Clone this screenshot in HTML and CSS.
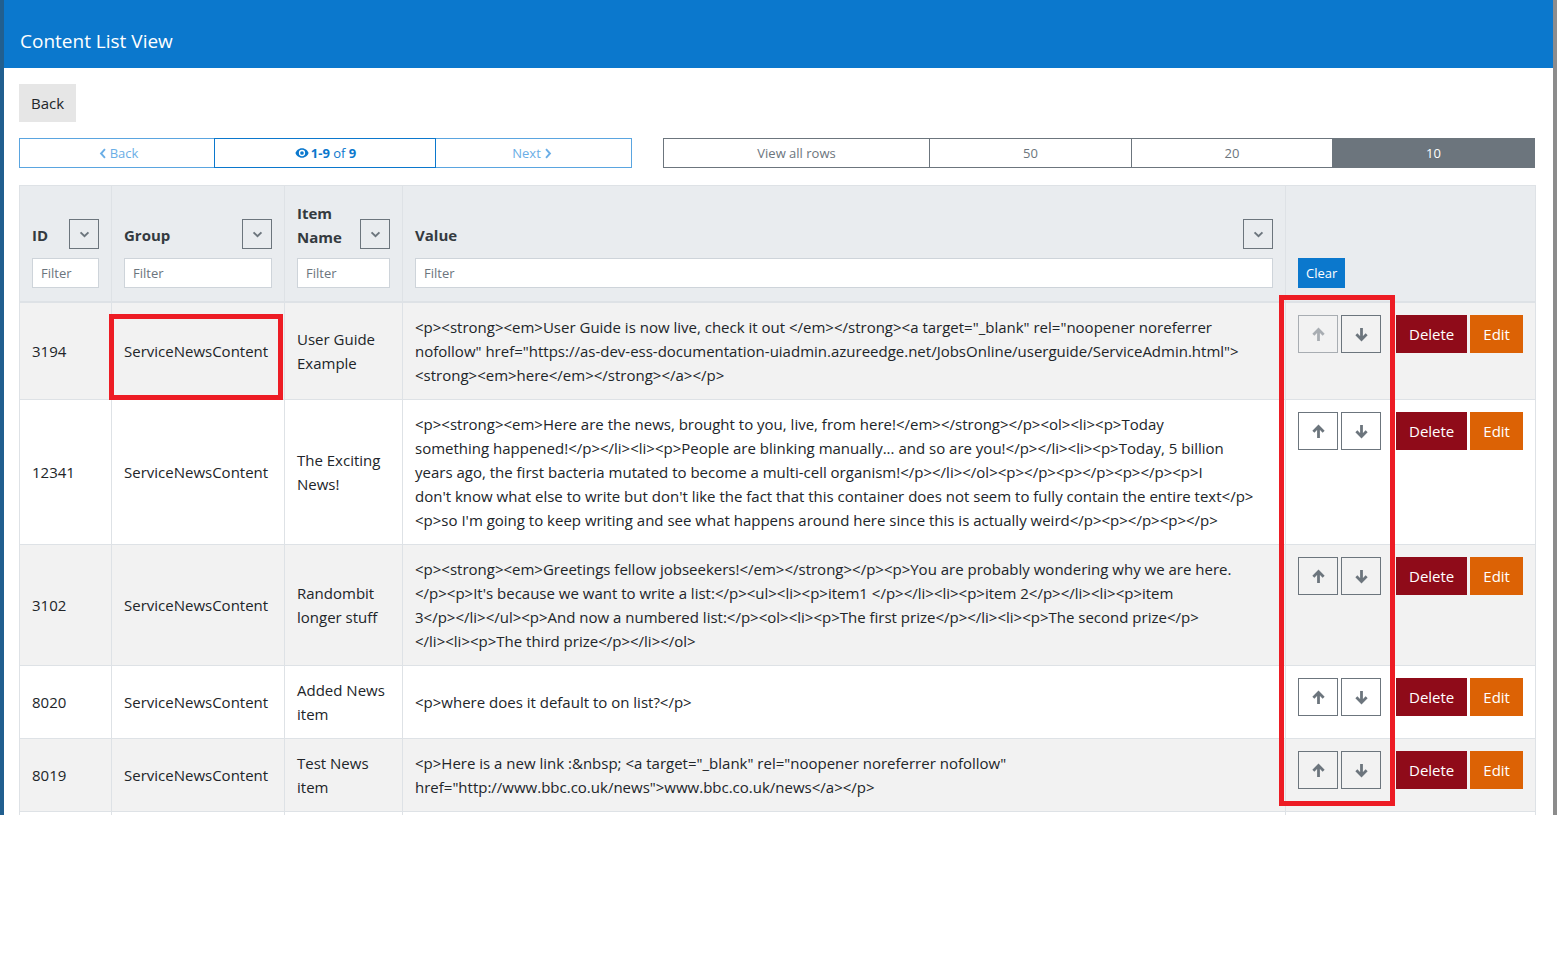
FILE: index.html
```html
<!DOCTYPE html>
<html lang="en">
<head>
<meta charset="utf-8">
<title>Content List View</title>
<link rel="stylesheet" href="styles.css">
</head>
<body>
<div class="window">
  <div class="edge-left"></div>
  <div class="main">
    <header class="topbar"><h1 class="title">Content List View</h1></header>
    <div class="content">
      <button class="btn-back">Back</button>
      <div class="toolbar">
        <div class="pager">
          <button class="pg pg-side"><svg class="chev" viewBox="0 0 10 14" width="8" height="11"><polyline points="7.5,1.5 2.5,7 7.5,12.5" fill="none" stroke="currentColor" stroke-width="2.4"/></svg>Back</button>
          <div class="pg pg-info"><svg class="eye" viewBox="0 0 16 16" width="16" height="14"><path d="M8 2.5C4 2.5 1.3 5.6.5 8c.8 2.4 3.5 5.5 7.5 5.5s6.7-3.1 7.5-5.5C14.7 5.6 12 2.5 8 2.5z" fill="currentColor"/><circle cx="8" cy="8" r="3.6" fill="#fff"/><circle cx="8" cy="8" r="2.1" fill="currentColor"/></svg><b>1-9</b>&nbsp;of&nbsp;<b>9</b></div>
          <button class="pg pg-side">Next<svg class="chev" viewBox="0 0 10 14" width="8" height="11"><polyline points="2.5,1.5 7.5,7 2.5,12.5" fill="none" stroke="currentColor" stroke-width="2.4"/></svg></button>
        </div>
        <div class="sizes">
          <button class="sz">View all rows</button>
          <button class="sz">50</button>
          <button class="sz">20</button>
          <button class="sz sz-active">10</button>
        </div>
      </div>

      <table class="grid">
        <colgroup>
          <col class="c-id"><col class="c-group"><col class="c-item"><col class="c-value"><col class="c-actions">
        </colgroup>
        <thead>
          <tr>
            <th>
              <div class="th-top"><span class="th-label">ID</span><button class="dd"><svg viewBox="0 0 12 8" width="11" height="7"><polyline points="1.5,1.5 6,6 10.5,1.5" fill="none" stroke="currentColor" stroke-width="2.2"/></svg></button></div>
              <input class="filter" placeholder="Filter">
            </th>
            <th>
              <div class="th-top"><span class="th-label">Group</span><button class="dd"><svg viewBox="0 0 12 8" width="11" height="7"><polyline points="1.5,1.5 6,6 10.5,1.5" fill="none" stroke="currentColor" stroke-width="2.2"/></svg></button></div>
              <input class="filter" placeholder="Filter">
            </th>
            <th>
              <div class="th-top"><span class="th-label th-label-wrap">Item Name</span><button class="dd"><svg viewBox="0 0 12 8" width="11" height="7"><polyline points="1.5,1.5 6,6 10.5,1.5" fill="none" stroke="currentColor" stroke-width="2.2"/></svg></button></div>
              <input class="filter" placeholder="Filter">
            </th>
            <th>
              <div class="th-top"><span class="th-label">Value</span><button class="dd"><svg viewBox="0 0 12 8" width="11" height="7"><polyline points="1.5,1.5 6,6 10.5,1.5" fill="none" stroke="currentColor" stroke-width="2.2"/></svg></button></div>
              <input class="filter" placeholder="Filter">
            </th>
            <th><button class="btn-clear">Clear</button></th>
          </tr>
        </thead>
        <tbody>
          <tr class="striped">
            <td>3194</td>
            <td>ServiceNewsContent</td>
            <td>User Guide Example</td>
            <td class="val">&lt;p&gt;&lt;strong&gt;&lt;em&gt;User Guide is now live, check it out &lt;/em&gt;&lt;/strong&gt;&lt;a target="_blank" rel="noopener noreferrer<br>nofollow" href="https://as-dev-ess-documentation-uiadmin.azureedge.net/JobsOnline/userguide/ServiceAdmin.html"&gt;<br>&lt;strong&gt;&lt;em&gt;here&lt;/em&gt;&lt;/strong&gt;&lt;/a&gt;&lt;/p&gt;</td>
            <td class="act">
              <div class="acts">
                <button class="mv" disabled><svg viewBox="0 0 14 14" width="15" height="15"><path d="M7 13V2.5M2.2 7.2L7 2.4l4.8 4.8" fill="none" stroke="currentColor" stroke-width="2.6"/></svg></button>
                <button class="mv"><svg viewBox="0 0 14 14" width="15" height="15"><path d="M7 1v10.5M2.2 6.8L7 11.6l4.8-4.8" fill="none" stroke="currentColor" stroke-width="2.6"/></svg></button>
                <button class="btn-del">Delete</button>
                <button class="btn-edit">Edit</button>
              </div>
            </td>
          </tr>
          <tr>
            <td>12341</td>
            <td>ServiceNewsContent</td>
            <td>The Exciting News!</td>
            <td class="val">&lt;p&gt;&lt;strong&gt;&lt;em&gt;Here are the news, brought to you, live, from here!&lt;/em&gt;&lt;/strong&gt;&lt;/p&gt;&lt;ol&gt;&lt;li&gt;&lt;p&gt;Today<br>something happened!&lt;/p&gt;&lt;/li&gt;&lt;li&gt;&lt;p&gt;People are blinking manually... and so are you!&lt;/p&gt;&lt;/li&gt;&lt;li&gt;&lt;p&gt;Today, 5 billion<br>years ago, the first bacteria mutated to become a multi-cell organism!&lt;/p&gt;&lt;/li&gt;&lt;/ol&gt;&lt;p&gt;&lt;/p&gt;&lt;p&gt;&lt;/p&gt;&lt;p&gt;&lt;/p&gt;&lt;p&gt;I<br>don't know what else to write but don't like the fact that this container does not seem to fully contain the entire text&lt;/p&gt;<br>&lt;p&gt;so I'm going to keep writing and see what happens around here since this is actually weird&lt;/p&gt;&lt;p&gt;&lt;/p&gt;&lt;p&gt;&lt;/p&gt;</td>
            <td class="act">
              <div class="acts">
                <button class="mv"><svg viewBox="0 0 14 14" width="15" height="15"><path d="M7 13V2.5M2.2 7.2L7 2.4l4.8 4.8" fill="none" stroke="currentColor" stroke-width="2.6"/></svg></button>
                <button class="mv"><svg viewBox="0 0 14 14" width="15" height="15"><path d="M7 1v10.5M2.2 6.8L7 11.6l4.8-4.8" fill="none" stroke="currentColor" stroke-width="2.6"/></svg></button>
                <button class="btn-del">Delete</button>
                <button class="btn-edit">Edit</button>
              </div>
            </td>
          </tr>
          <tr class="striped">
            <td>3102</td>
            <td>ServiceNewsContent</td>
            <td>Randombit longer stuff</td>
            <td class="val">&lt;p&gt;&lt;strong&gt;&lt;em&gt;Greetings fellow jobseekers!&lt;/em&gt;&lt;/strong&gt;&lt;/p&gt;&lt;p&gt;You are probably wondering why we are here.<br>&lt;/p&gt;&lt;p&gt;It's because we want to write a list:&lt;/p&gt;&lt;ul&gt;&lt;li&gt;&lt;p&gt;item1 &lt;/p&gt;&lt;/li&gt;&lt;li&gt;&lt;p&gt;item 2&lt;/p&gt;&lt;/li&gt;&lt;li&gt;&lt;p&gt;item<br>3&lt;/p&gt;&lt;/li&gt;&lt;/ul&gt;&lt;p&gt;And now a numbered list:&lt;/p&gt;&lt;ol&gt;&lt;li&gt;&lt;p&gt;The first prize&lt;/p&gt;&lt;/li&gt;&lt;li&gt;&lt;p&gt;The second prize&lt;/p&gt;<br>&lt;/li&gt;&lt;li&gt;&lt;p&gt;The third prize&lt;/p&gt;&lt;/li&gt;&lt;/ol&gt;</td>
            <td class="act">
              <div class="acts">
                <button class="mv"><svg viewBox="0 0 14 14" width="15" height="15"><path d="M7 13V2.5M2.2 7.2L7 2.4l4.8 4.8" fill="none" stroke="currentColor" stroke-width="2.6"/></svg></button>
                <button class="mv"><svg viewBox="0 0 14 14" width="15" height="15"><path d="M7 1v10.5M2.2 6.8L7 11.6l4.8-4.8" fill="none" stroke="currentColor" stroke-width="2.6"/></svg></button>
                <button class="btn-del">Delete</button>
                <button class="btn-edit">Edit</button>
              </div>
            </td>
          </tr>
          <tr>
            <td>8020</td>
            <td>ServiceNewsContent</td>
            <td>Added News item</td>
            <td class="val">&lt;p&gt;where does it default to on list?&lt;/p&gt;</td>
            <td class="act">
              <div class="acts">
                <button class="mv"><svg viewBox="0 0 14 14" width="15" height="15"><path d="M7 13V2.5M2.2 7.2L7 2.4l4.8 4.8" fill="none" stroke="currentColor" stroke-width="2.6"/></svg></button>
                <button class="mv"><svg viewBox="0 0 14 14" width="15" height="15"><path d="M7 1v10.5M2.2 6.8L7 11.6l4.8-4.8" fill="none" stroke="currentColor" stroke-width="2.6"/></svg></button>
                <button class="btn-del">Delete</button>
                <button class="btn-edit">Edit</button>
              </div>
            </td>
          </tr>
          <tr class="striped">
            <td>8019</td>
            <td>ServiceNewsContent</td>
            <td>Test News item</td>
            <td class="val">&lt;p&gt;Here is a new link :&amp;nbsp; &lt;a target="_blank" rel="noopener noreferrer nofollow"<br>href="http://www.bbc.co.uk/news"&gt;www.bbc.co.uk/news&lt;/a&gt;&lt;/p&gt;</td>
            <td class="act">
              <div class="acts">
                <button class="mv"><svg viewBox="0 0 14 14" width="15" height="15"><path d="M7 13V2.5M2.2 7.2L7 2.4l4.8 4.8" fill="none" stroke="currentColor" stroke-width="2.6"/></svg></button>
                <button class="mv"><svg viewBox="0 0 14 14" width="15" height="15"><path d="M7 1v10.5M2.2 6.8L7 11.6l4.8-4.8" fill="none" stroke="currentColor" stroke-width="2.6"/></svg></button>
                <button class="btn-del">Delete</button>
                <button class="btn-edit">Edit</button>
              </div>
            </td>
          </tr>
          <tr>
            <td>&nbsp;</td><td>&nbsp;</td><td>&nbsp;</td><td>&nbsp;</td><td>&nbsp;</td>
          </tr>
        </tbody>
      </table>
    </div>
  </div>
  <div class="scrollbar"></div>
  <div class="mark mark-group"></div>
  <div class="mark mark-order"></div>
</div>
</body>
</html>
```

FILE: styles.css
```css
* { box-sizing: border-box; }
html, body { margin: 0; background: #fff; }
body {
  font-family: "Open Sans", "Noto Sans", sans-serif;
  font-size: 15px;
  color: #212529;
}
button, input { font-family: inherit; }

.window {
  position: relative;
  display: flex;
  height: 815px;
  overflow: hidden;
}
.edge-left { flex: none; width: 4px; background: #215f8f; }
.main { flex: 1; min-width: 0; }
.scrollbar { flex: none; width: 4px; background: #8c8c8c; }

.topbar {
  height: 68px;
  background: #0b78cd;
  padding: 28px 16px 0;
}
.title {
  margin: 0;
  font-size: 19px;
  line-height: 26px;
  font-weight: 400;
  color: #fff;
}

.content { padding: 16px 17px 0 15px; }

.btn-back {
  display: block;
  height: 38px;
  padding: 0 12px;
  border: none;
  background: #e6e6e6;
  color: #212529;
  font-size: 15px;
}

.toolbar {
  display: flex;
  gap: 31px;
  margin-top: 16px;
  height: 30px;
}
.pager {
  display: grid;
  grid-template-columns: 196px 221px 196px;
}
.pg {
  display: flex;
  align-items: center;
  justify-content: center;
  height: 30px;
  border: 1px solid #5aa5e0;
  background: #fff;
  font-size: 13px;
  color: #6aaee6;
  padding: 0;
}
.pg + .pg { margin-left: -1px; }
.pg-info {
  position: relative;
  border-color: #0b78cd;
  color: #0b78cd;
  z-index: 1;
}
.pg-info b { font-weight: 700; }
.chev { margin: 0 3px; }
.eye { margin-right: 1px; }

.sizes {
  display: grid;
  grid-template-columns: 267px 202px 201px 202px;
}
.sz {
  height: 30px;
  border: 1px solid #6c757d;
  background: #fff;
  color: #6c757d;
  font-size: 13px;
  padding: 0;
}
.sz + .sz { margin-left: -1px; }
.sz-active { background: #6c757d; color: #fff; }

.grid {
  margin-top: 17px;
  width: 1516px;
  border-collapse: collapse;
  table-layout: fixed;
  border: 1px solid #dee2e6;
}
.c-id { width: 92px; }
.c-group { width: 173px; }
.c-item { width: 118px; }
.c-value { width: 883px; }
.c-actions { width: 250px; }

.grid th, .grid td {
  border: 1px solid #dee2e6;
  padding: 12px;
  line-height: 24px;
  text-align: left;
}
.grid thead th {
  background: #e9ecef;
  vertical-align: bottom;
  padding-top: 15px;
  padding-bottom: 13px;
  border-bottom: 2px solid #dee2e6;
}
.th-top {
  display: flex;
  align-items: flex-end;
  justify-content: space-between;
  gap: 6px;
}
.th-label {
  font-weight: 700;
  font-size: 15px;
  color: #343a40;
  line-height: 24px;
  padding-bottom: 2px;
}
.th-label-wrap { padding-bottom: 0; }
.dd {
  flex: none;
  width: 30px;
  height: 30px;
  border: 1px solid #6c757d;
  background: transparent;
  color: #6c757d;
  padding: 0;
  display: flex;
  align-items: center;
  justify-content: center;
}
.filter {
  display: block;
  width: 100%;
  height: 30px;
  margin-top: 9px;
  border: 1px solid #ced4da;
  background: #fff;
  padding: 0 8px;
  font-size: 13px;
  color: #495057;
}
.filter::placeholder { color: #6c757d; }
.btn-clear {
  height: 30px;
  padding: 0 8px;
  border: none;
  background: #0b78cd;
  color: #fff;
  font-size: 13px;
}

.grid tbody td { vertical-align: middle; }
.grid tbody tr.striped td { background: #f2f2f2; }
.grid tbody td.val { word-break: break-word; }
.grid tbody td.act { vertical-align: top; padding-top: 12px; }

.acts { display: flex; align-items: center; }
.mv {
  width: 40px;
  height: 38px;
  border: 1px solid #6c757d;
  background: transparent;
  color: #6c757d;
  padding: 0;
  display: flex;
  align-items: center;
  justify-content: center;
}
.mv + .mv { margin-left: 3px; }
.mv:disabled { border-color: #a8adb2; color: #a8adb2; }
.btn-del, .btn-edit {
  height: 38px;
  border: none;
  color: #fff;
  font-size: 15px;
  padding: 0 13px;
}
.btn-del { background: #8f0b19; margin-left: 15px; }
.btn-edit { background: #dc6205; margin-left: 3px; }

.mark {
  position: absolute;
  border: 5px solid #ed1c24;
  pointer-events: none;
}
.mark-group { left: 109px; top: 314px; width: 174px; height: 86px; }
.mark-order { left: 1279px; top: 295px; width: 116px; height: 511px; }
```
